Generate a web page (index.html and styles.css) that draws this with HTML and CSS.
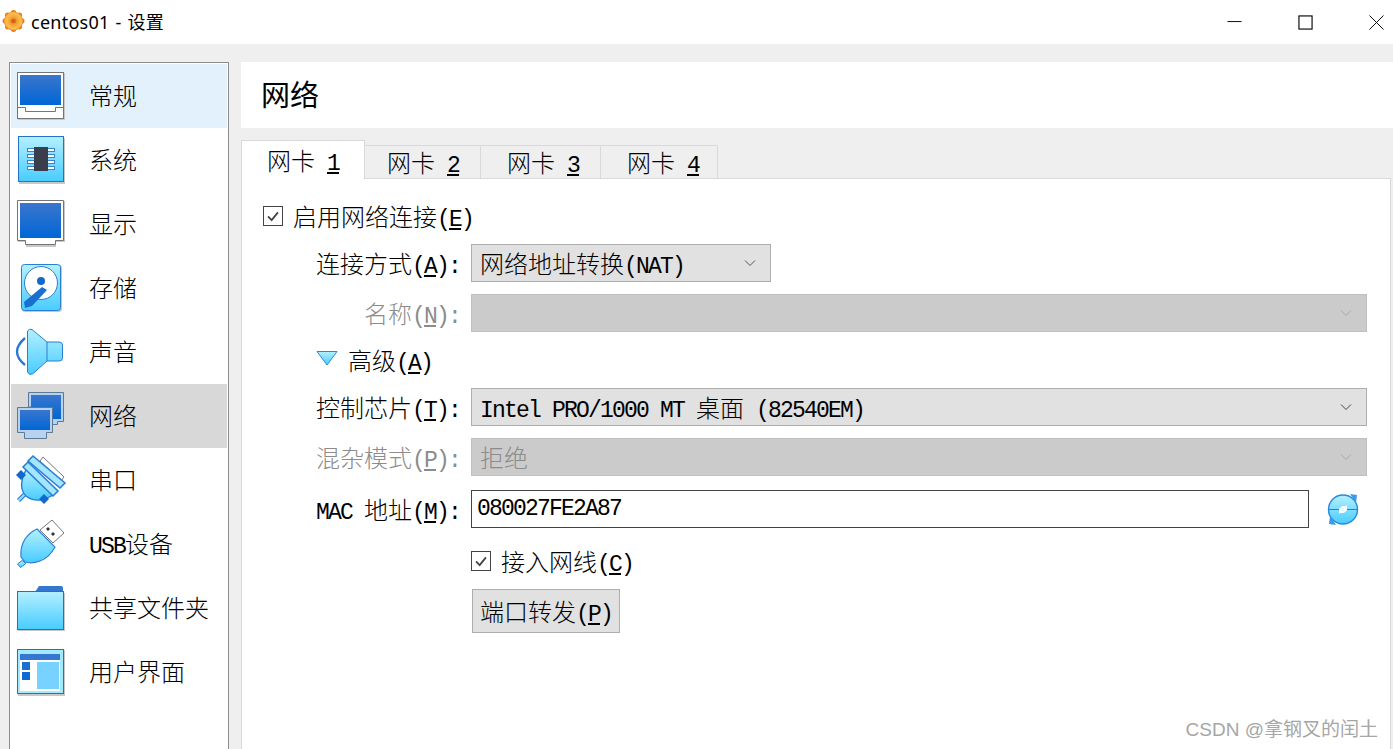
FILE: index.html
```html
<!DOCTYPE html>
<html lang="zh-CN">
<head>
<meta charset="utf-8">
<title>centos01 - 设置</title>
<link rel="stylesheet" href="styles.css">
</head>
<body>
<svg class="defs" aria-hidden="true">
  <defs>
    <linearGradient id="screen" x1="0" y1="0" x2="0" y2="1"><stop offset="0" stop-color="#3a76cc"/><stop offset="1" stop-color="#0066d6"/></linearGradient>
    <linearGradient id="cyan" x1="0" y1="0" x2="0" y2="1"><stop offset="0" stop-color="#b4f0ff"/><stop offset="1" stop-color="#48ccff"/></linearGradient>
    <radialGradient id="gear" cx=".5" cy=".5" r=".55"><stop offset="0" stop-color="#e0701c"/><stop offset=".35" stop-color="#f5a030"/><stop offset=".72" stop-color="#fcc050"/><stop offset="1" stop-color="#e87a18"/></radialGradient>
  </defs>
</svg>

<header class="titlebar">
  <svg class="app-icon" viewBox="0 0 24 24">
    <g fill="#e87a18">
      <circle cx="12" cy="3.400" r="2.800"/><circle cx="12" cy="20.600" r="2.800"/>
      <circle cx="3.400" cy="12" r="2.800"/><circle cx="20.600" cy="12" r="2.800"/>
      <circle cx="5.900" cy="5.900" r="2.800"/><circle cx="18.100" cy="5.900" r="2.800"/>
      <circle cx="5.900" cy="18.100" r="2.800"/><circle cx="18.100" cy="18.100" r="2.800"/>
    </g>
    <circle cx="12" cy="12" r="10" fill="url(#gear)"/>
    <circle cx="12" cy="12" r="2.400" fill="#d9601c"/>
  </svg>
  <span class="win-title">centos01 - 设置</span>
  <div class="win-controls">
    <svg class="win-btn" viewBox="0 0 16 16"><path d="M0.500 7h15" stroke="#000" fill="none"/></svg>
    <svg class="win-btn" viewBox="0 0 16 16"><rect x="1" y="1" width="14" height="14" stroke="#000" stroke-width="1.200" fill="none"/></svg>
    <svg class="win-btn" viewBox="0 0 16 16"><path d="M0.500 0.500l15 15M15.500 0.500l-15 15" stroke="#000" fill="none"/></svg>
  </div>
</header>

<div class="window-body">
  <nav class="sidebar">
    <div class="nav-item hover">
      <svg class="nav-icon" viewBox="0 0 48 48">
        <rect x="1" y="1" width="47" height="47" fill="#c8c8c8"/>
        <rect x=".5" y=".5" width="46" height="46" fill="#fff" stroke="#757575"/>
        <rect x="3" y="3" width="41" height="30" fill="url(#screen)"/>
        <path d="M.5 35.500H8.500V39.500H38.500V35.500H46.500" fill="none" stroke="#757575"/>
      </svg>
      <span class="nav-label">常规</span>
    </div>
    <div class="nav-item">
      <svg class="nav-icon" viewBox="0 0 48 48">
        <rect x="2" y="2" width="46" height="46" fill="#c8c8c8"/>
        <rect x="1.500" y=".5" width="45" height="45" fill="url(#cyan)" stroke="#2074cc"/>
        <g fill="#fff" stroke="#3a82d0"><rect x="10.500" y="12.500" width="27" height="3"/><rect x="10.500" y="18.500" width="27" height="3"/><rect x="10.500" y="24.500" width="27" height="3"/><rect x="10.500" y="30.500" width="27" height="3"/></g>
        <rect x="17" y="11" width="14" height="24" fill="#3a3e4c"/>
      </svg>
      <span class="nav-label">系统</span>
    </div>
    <div class="nav-item">
      <svg class="nav-icon" viewBox="0 0 48 48">
        <path d="M1 1H48V42H39V47H9V42H1Z" fill="#c8c8c8"/>
        <path d="M.5 .5H46.500V40.500H38.500V44.500H8.500V40.500H.5Z" fill="#fff" stroke="#757575"/>
        <rect x="3" y="3" width="41" height="35" fill="url(#screen)"/>
      </svg>
      <span class="nav-label">显示</span>
    </div>
    <div class="nav-item">
      <svg class="nav-icon" viewBox="0 0 48 48">
        <rect x="5" y="1" width="40" height="47" rx="3" fill="#c8c8c8"/>
        <rect x="4.500" y=".5" width="39" height="46" rx="3" fill="url(#cyan)" stroke="#2a7fd4"/>
        <circle cx="24" cy="19" r="16.500" fill="#fff" stroke="#2a7fd4"/>
        <circle cx="24" cy="17" r="4" fill="#1268cc"/>
        <path d="M25 23L30 26L15 42L8 44L7 38Z" fill="#1a6fd0"/>
      </svg>
      <span class="nav-label">存储</span>
    </div>
    <div class="nav-item">
      <svg class="nav-icon" viewBox="0 0 48 48">
        <path d="M8 10Q-8 24 8 37" fill="none" stroke="#2a78d0" stroke-width="2.400"/>
        <path d="M10.500 3Q12 .5 15 1.500L30 14H42Q45.500 14 45.500 17V30Q45.500 33 42 33H30L15.500 46Q12 47.500 10.500 44Z" fill="url(#cyan)" stroke="#2a7fd4"/>
        <path d="M30 14V33" stroke="#2a7fd4" fill="none"/>
      </svg>
      <span class="nav-label">声音</span>
    </div>
    <div class="nav-item selected">
      <svg class="nav-icon" viewBox="0 0 48 48">
        <path d="M11.500 .5H46.500V29.500H40.500V32.500H26V15H11.500Z" fill="#b8d2ee" stroke="#5a7a9a"/>
        <rect x="14" y="3" width="30" height="24" fill="url(#screen)"/>
        <path d="M.5 15.500H35.500V40.500H29.500V46.500H7.500V40.500H.5Z" fill="#b8d2ee" stroke="#5a7a9a"/>
        <rect x="3" y="18" width="30" height="20" fill="url(#screen)"/>
      </svg>
      <span class="nav-label">网络</span>
    </div>
    <div class="nav-item">
      <svg class="nav-icon" viewBox="0 0 48 48">
        <path d="M26 1L47 21L44 25L23 5Z" fill="#fff" stroke="#777"/>
        <path d="M1.500 44.500L8 38" stroke="#2a7fd4" stroke-width="4.400" fill="none"/>
        <path d="M1.500 44.500L8 38" stroke="#8fdcff" stroke-width="2.200" fill="none"/>
        <path d="M10 13L37 38Q32 42 24 44Q15 45 9 40Q3 34 5 25Q6 18 10 13Z" fill="url(#cyan)" stroke="#2a7fd4" stroke-width="1.400"/>
        <path d="M-1 19L4 14L9 19L4 24Z" fill="#1268cc"/>
        <path d="M22 43L27 38L32 43L27 48Z" fill="#1268cc"/>
        <path d="M6 11L11 6L41 35L36 40Z" fill="#a4e6ff" stroke="#2a7fd4" stroke-width="1.600"/>
        <path d="M11 5L16 0L48 27L43 32Z" fill="#a4e6ff" stroke="#2a7fd4" stroke-width="1.600"/>
      </svg>
      <span class="nav-label">串口</span>
    </div>
    <div class="nav-item">
      <svg class="nav-icon" viewBox="0 0 48 48">
        <path d="M23 10L35 0L47 13L36 23Z" fill="#fff" stroke="#777"/>
        <path d="M29 9l2-2 2 2-2 2zM34 14l2-2 2 2-2 2z" fill="#333"/>
        <path d="M20 9L38 27Q32 38 23 41Q15 44 8 42L4 37Q3 27 8 19Q13 12 20 9Z" fill="url(#cyan)" stroke="#2a7fd4" stroke-width="1.200"/>
        <path d="M0.500 44L5 40.500L9 43.500L3.500 47.500Z" fill="url(#cyan)" stroke="#2a7fd4"/>
      </svg>
      <span class="nav-label"><span class="m">USB</span>设备</span>
    </div>
    <div class="nav-item">
      <svg class="nav-icon" viewBox="0 0 48 48">
        <rect x="1" y="9" width="47" height="38" fill="#c8c8c8"/>
        <path d="M18 8L22 2H44Q46 2 46 4V10H18Z" fill="#3476d0"/>
        <rect x=".5" y="7.500" width="46" height="38" fill="url(#cyan)" stroke="#1f72cc"/>
      </svg>
      <span class="nav-label">共享文件夹</span>
    </div>
    <div class="nav-item">
      <svg class="nav-icon" viewBox="0 0 48 48">
        <rect x="1" y="2" width="47" height="46" fill="#c8c8c8"/>
        <rect x=".5" y="1.500" width="46" height="44" fill="#a4eaff" stroke="#1f72cc"/>
        <rect x="3" y="6" width="40" height="37" fill="#fff"/>
        <rect x="3" y="6" width="40" height="6" fill="#3476d0"/>
        <rect x="5" y="14" width="8" height="8" fill="#1a6fd0"/>
        <rect x="5" y="24" width="8" height="8" fill="#0d68d4"/>
        <rect x="20" y="14" width="22" height="27" fill="#78d2ff"/>
      </svg>
      <span class="nav-label">用户界面</span>
    </div>
  </nav>

  <main class="content">
    <h1 class="page-title">网络</h1>
    <div class="tabs">
      <div class="tab active">网卡<span class="m"> <u>1</u></span></div>
      <div class="tab tab-2">网卡<span class="m"> <u>2</u></span></div>
      <div class="tab tab-3">网卡<span class="m"> <u>3</u></span></div>
      <div class="tab tab-4">网卡<span class="m"> <u>4</u></span></div>
    </div>
    <section class="pane">
      <div class="form">
        <div class="check-row top-check">
          <span class="checkbox"><svg viewBox="0 0 20 20"><path d="M4.500 10.500L8.500 14.500L15.500 6" fill="none" stroke="#444" stroke-width="2"/></svg></span>
          <span>启用网络连接<span class="m">(<u>E</u>)</span></span>
        </div>

        <label class="field-label">连接方式<span class="m">(<u>A</u>):</span></label>
        <div class="combo short"><span>网络地址转换<span class="m">(NAT)</span></span><svg class="chev" viewBox="0 0 12 8"><path d="M1 1.500L6 6.500L11 1.500" fill="none" stroke="#555"/></svg></div>

        <label class="field-label off">名称<span class="m">(<u>N</u>):</span></label>
        <div class="combo off"><span></span><svg class="chev" viewBox="0 0 12 8"><path d="M1 1.500L6 6.500L11 1.500" fill="none" stroke="#a8a8a8"/></svg></div>

        <div class="advanced">
          <svg class="tri" viewBox="0 0 22 16"><path d="M1 1.500H21L11 15Z" fill="url(#cyan)" stroke="#2a8ad8"/></svg>
          <span>高级<span class="m">(<u>A</u>)</span></span>
        </div>

        <label class="field-label">控制芯片<span class="m">(<u>T</u>):</span></label>
        <div class="combo"><span><span class="m">Intel PRO/1000 MT </span>桌面<span class="m"> (82540EM)</span></span><svg class="chev" viewBox="0 0 12 8"><path d="M1 1.500L6 6.500L11 1.500" fill="none" stroke="#444"/></svg></div>

        <label class="field-label off">混杂模式<span class="m">(<u>P</u>):</span></label>
        <div class="combo off"><span>拒绝</span><svg class="chev" viewBox="0 0 12 8"><path d="M1 1.500L6 6.500L11 1.500" fill="none" stroke="#a8a8a8"/></svg></div>

        <label class="field-label mac"><span class="m">MAC </span>地址<span class="m">(<u>M</u>):</span></label>
        <div class="mac-field">
          <input class="mac-input" type="text" value="080027FE2A87">
          <svg class="refresh" viewBox="0 0 32 32">
            <circle cx="16" cy="16.500" r="14.500" fill="url(#cyan)" stroke="#2a8ad8" stroke-width="1.400"/>
            <path d="M1.500 16.500H30.500" stroke="#2a7fd4" fill="none"/>
            <path d="M23 1L30 2L29 10ZM9 32L2 31L3 23Z" fill="#3a9ae8"/>
            <path d="M12 17a4.500 4.500 0 0 1 6-3.800l2-1v4.800h-4.500l1.200-1.400a2.500 2.500 0 0 0-2.700 1.400ZM20 16a4.500 4.500 0 0 1-6 3.800l-2 1v-4.800h4.500l-1.200 1.400a2.500 2.500 0 0 0 2.700-1.400Z" fill="#fff"/>
          </svg>
        </div>

        <div class="check-row cable">
          <span class="checkbox"><svg viewBox="0 0 20 20"><path d="M4.500 10.500L8.500 14.500L15.500 6" fill="none" stroke="#444" stroke-width="2"/></svg></span>
          <span>接入网线<span class="m">(<u>C</u>)</span></span>
        </div>

        <button class="port-btn" type="button">端口转发<span class="m">(<u>P</u>)</span></button>
      </div>
    </section>
  </main>
</div>
<div class="watermark">CSDN @拿钢叉的闰土</div>
</body>
</html>
```
FILE: styles.css
```css
* { box-sizing: border-box; }
html, body { height: 100%; }
body {
  margin: 0;
  width: 1393px;
  height: 749px;
  overflow: hidden;
  position: relative;
  display: flex;
  flex-direction: column;
  background: #efefef;
  color: #000;
  font-family: "Noto Sans CJK SC", "Liberation Mono", sans-serif;
  font-size: 24px;
  font-weight: 300;
  line-height: 32px;
}
.defs { display: block; width: 0; height: 0; }
.m {
  font-family: "Liberation Mono", monospace;
  font-size: 23px;
  font-weight: 400;
  letter-spacing: -1.8px;
  white-space: pre;
  line-height: 20px;
}

.titlebar {
  flex: none;
  height: 44px;
  background: #fff;
  display: flex;
  align-items: center;
  padding-left: 2px;
}
.app-icon { width: 23px; height: 24px; margin: -2px 6px 0 0; flex: none; }
.win-title {
  font-family: "Noto Sans", "Noto Sans CJK SC", sans-serif;
  font-size: 18px;
  font-weight: 400;
  line-height: 24px;
  letter-spacing: .25px;
  word-spacing: 1px;
  margin-top: -1px;
}
.win-controls { margin-left: auto; display: flex; gap: 56px; padding-right: 9px; }
.win-btn { width: 15px; height: 15px; display: block; }

.window-body {
  flex: 1;
  min-height: 0;
  display: flex;
  gap: 12px;
  padding: 18px 0 0 9px;
}
.sidebar {
  flex: none;
  width: 220px;
  background: #fff;
  border: 1px solid #8c8c8c;
  border-bottom: 0;
  padding: 1px;
}
.nav-item {
  height: 64px;
  display: flex;
  align-items: center;
  padding-left: 6px;
}
.nav-item.hover { background: #e2f1fc; }
.nav-item.selected { background: #d8d8d8; }
.nav-icon { width: 48px; height: 48px; flex: none; margin-right: 24px; overflow: visible; }
.nav-label { white-space: nowrap; padding-bottom: 2px; }

.content { flex: 1; min-width: 0; display: flex; flex-direction: column; }
.page-title {
  flex: none;
  margin: 0;
  height: 66px;
  background: #fff;
  padding-left: 20px;
  font-size: 29px;
  font-weight: 400;
  line-height: 62px;
}
.tabs {
  flex: none;
  display: flex;
  align-items: flex-end;
  margin-top: 12px;
  position: relative;
  z-index: 1;
  margin-bottom: -1px;
}
.tab {
  height: 34px;
  background: #efefef;
  border: 1px solid #d9d9d9;
  border-left: 0;
  line-height: 31px;
  white-space: nowrap;
}
.tab-2 { width: 116px; padding-left: 22px; }
.tab-3 { width: 120px; padding-left: 26px; }
.tab-4 { width: 117px; padding-left: 26px; }
.tab.active {
  width: 124px;
  height: 39px;
  padding-left: 25px;
  background: #fff;
  border-left: 1px solid #d9d9d9;
  border-bottom: 0;
  line-height: 37px;
}
.pane {
  flex: 1;
  min-height: 0;
  margin-right: 2px;
  background: #fff;
  border: 1px solid #d9d9d9;
  border-bottom: 0;
  padding: 21px 23px 0 0;
}
.form {
  display: grid;
  grid-template-columns: 218px 1fr;
  column-gap: 11px;
  row-gap: 12px;
  align-items: center;
}
.check-row { display: flex; align-items: center; gap: 10px; height: 32px; }
.top-check { grid-column: 1 / -1; padding-left: 21px; }
.cable { grid-column: 2; margin-top: 5px; }
.checkbox { width: 20px; height: 20px; border: 1px solid #444; background: #fff; flex: none; display: block; }
.checkbox svg { display: block; width: 18px; height: 18px; }
.field-label { text-align: right; white-space: nowrap; }
.field-label.off { color: #8c8c8c; }
.field-label.mac { margin-top: 2px; }
.combo {
  height: 38px;
  background: #e1e1e1;
  border: 1px solid #adadad;
  display: flex;
  align-items: center;
  justify-content: space-between;
  padding: 0 14px 0 8px;
  white-space: nowrap;
}
.combo.short { width: 300px; }
.combo.off { background: #cbcbcb; border-color: #c0c0c0; color: #8c8c8c; }
.chev { width: 12px; height: 8px; flex: none; }
.advanced { grid-column: 1 / -1; display: flex; align-items: center; gap: 10px; height: 32px; padding-left: 74px; }
.tri { width: 22px; height: 16px; flex: none; margin-top: -4px; }
.mac-field { display: flex; align-items: center; gap: 18px; padding-right: 8px; margin-top: 2px; }
.mac-input {
  flex: 1;
  min-width: 0;
  height: 38px;
  border: 1px solid #444;
  border-radius: 0;
  padding: 0 5px;
  background: #fff;
  color: #000;
  font-family: "Liberation Mono", monospace;
  font-size: 23px;
  letter-spacing: -1.8px;
  outline: none;
}
.refresh { width: 32px; height: 32px; flex: none; }
.port-btn {
  grid-column: 2;
  justify-self: start;
  margin-left: 1px;
  width: 148px;
  height: 44px;
  padding: 0;
  background: #e1e1e1;
  border: 1px solid #adadad;
  color: #000;
  font: inherit;
}
.watermark {
  position: absolute;
  right: 15px;
  bottom: 5px;
  font-family: "Liberation Sans", "Noto Sans CJK SC", sans-serif;
  font-size: 19px;
  font-weight: 400;
  line-height: 28px;
  color: #a6a6a6;
}
```
